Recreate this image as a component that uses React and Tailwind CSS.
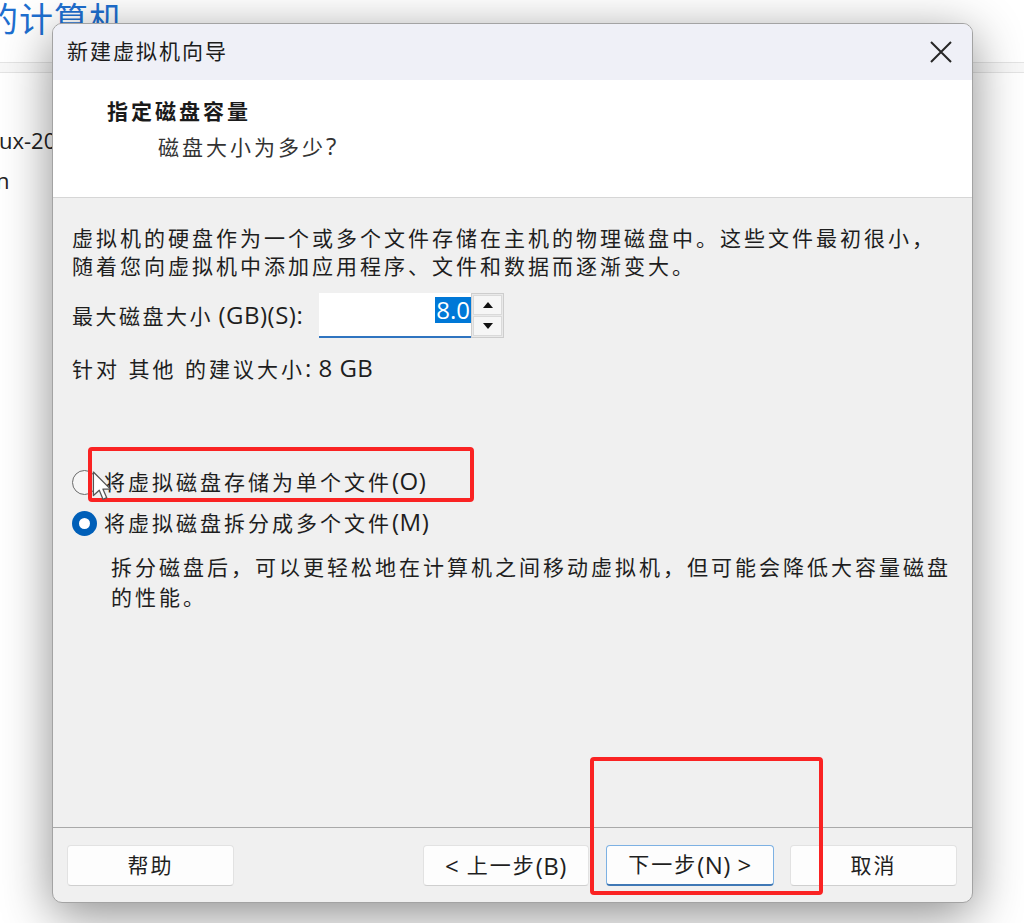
import { useState } from 'react';

// Latin runs are set larger than the CJK text, like Segoe UI next to YaHei
const L = ({ children }) => <span className="text-[24px] leading-none tracking-[0.5px]">{children}</span>;

const Radio = ({ checked }) =>
  checked ? (
    <span className="w-[25px] h-[25px] rounded-full bg-[#005fb8] flex items-center justify-center shrink-0">
      <span className="w-[11px] h-[11px] rounded-full bg-white" />
    </span>
  ) : (
    <span className="w-[25px] h-[25px] rounded-full border-[1.5px] border-[#6b6b6b] bg-[#f6f6f6] shrink-0" />
  );

const Btn = ({ children, primary, className = '' }) => (
  <button
    className={`h-[41px] rounded-[4px] bg-[#fdfdfd] text-[21px] tracking-[2px] text-[#1f1f1f] flex items-center justify-center whitespace-nowrap ${
      primary
        ? 'border border-[#7db1e3] border-b-2 border-b-[#3f78b5]'
        : 'border border-[#e2e2e2] border-b-[#cfcfcf]'
    } ${className}`}
  >
    {children}
  </button>
);

export default function App() {
  const [split, setSplit] = useState(true);

  return (
    <div className="relative w-[1024px] h-[923px] overflow-hidden bg-white font-['Open_Sans','Noto_Sans_CJK_SC',sans-serif] text-[#202020]">
      {/* Background application */}
      <div className="flex flex-col">
        <div className="h-[62px]">
          <div className="ml-[-16px] mt-[-4px] text-[34px] leading-[46px] tracking-[1px] text-[#1e6fd0]">的计算机</div>
        </div>
        <div className="h-[11px] border-y border-[#e4e4e4] bg-[#f8f8f8]" />
        <div className="pt-[50px] ml-[-1px] text-[22px] leading-[34px] text-[#222]">ux-2024</div>
        <div className="pt-[6px] ml-[-4px] text-[22px] leading-[34px] text-[#222]">n</div>
      </div>

      {/* Wizard window */}
      <div className="absolute left-[52px] top-[23px] w-[921px] h-[880px] rounded-[10px] border border-[#a3a3a3] bg-[#f0f0f0] overflow-hidden flex flex-col shadow-[0_12px_50px_rgba(0,0,0,0.45)]">
        {/* Title bar */}
        <div className="h-[56px] shrink-0 bg-[#eff0f7] flex items-center justify-between pl-[14px] pr-[20px]">
          <span className="text-[21px] tracking-[2px] text-[#1c1c1c]">新建虚拟机向导</span>
          <svg width="22" height="22" viewBox="0 0 22 22">
            <path d="M1 1 L21 21 M21 1 L1 21" stroke="#262626" strokeWidth="2" />
          </svg>
        </div>

        {/* Header */}
        <div className="h-[118px] shrink-0 bg-white border-b border-[#d6d6d6] pl-[54px] pt-[17px]">
          <div className="text-[21px] leading-[28px] font-bold tracking-[3px] text-[#1a1a1a]">指定磁盘容量</div>
          <div className="mt-[8px] ml-[51px] text-[21px] leading-[28px] tracking-[3px] text-[#333]">
            磁盘大小为多少<L>?</L>
          </div>
        </div>

        {/* Body */}
        <div className="flex-1 pl-[19px] pt-[26px] text-[21px] leading-[28px] text-[#1e1e1e]">
          <div className="tracking-[3px] whitespace-nowrap">虚拟机的硬盘作为一个或多个文件存储在主机的物理磁盘中。这些文件最初很小，</div>
          <div className="tracking-[3px] whitespace-nowrap">随着您向虚拟机中添加应用程序、文件和数据而逐渐变大。</div>

          <div className="mt-[13px] h-[45px] flex items-center">
            <span className="w-[247px] whitespace-nowrap">
              <span className="tracking-[2.5px]">最大磁盘大小</span> <L>(GB)(S):</L>
            </span>
            <div className="w-[152px] h-[45px] bg-white border-b-2 border-[#2f74c0] flex justify-end items-start pt-[4px]">
              <span className="h-[26px] px-[1px] bg-[#0078d7] text-white text-[24px] leading-[26px]">8.0</span>
            </div>
            <div className="w-[33px] h-[45px] flex flex-col border border-[#cdcdcd] bg-[#e9e9e9] p-[1px] gap-[1px]">
              <div className="flex-1 bg-[#f6f6f6] border border-[#dadada] flex items-center justify-center">
                <svg width="10" height="6" viewBox="0 0 10 6"><path d="M5 0 L10 6 L0 6 Z" fill="#111" /></svg>
              </div>
              <div className="flex-1 bg-[#f6f6f6] border border-[#dadada] flex items-center justify-center">
                <svg width="10" height="6" viewBox="0 0 10 6"><path d="M0 0 L10 0 L5 6 Z" fill="#111" /></svg>
              </div>
            </div>
          </div>

          <div className="mt-[17px] h-[28px] whitespace-nowrap">
            <span className="tracking-[3px]">针对 其他 的建议大小</span><L>: 8 GB</L>
          </div>

          <div className="mt-[85px] h-[28px] flex items-center gap-[7px] cursor-pointer" onClick={() => setSplit(false)}>
            <Radio checked={!split} />
            <span className="whitespace-nowrap"><span className="tracking-[3px]">将虚拟磁盘存储为单个文件</span><L>(O)</L></span>
          </div>
          <div className="mt-[13px] h-[28px] flex items-center gap-[7px] cursor-pointer" onClick={() => setSplit(true)}>
            <Radio checked={split} />
            <span className="whitespace-nowrap"><span className="tracking-[3px]">将虚拟磁盘拆分成多个文件</span><L>(M)</L></span>
          </div>
          <div className="mt-[15px] ml-[39px] leading-[30px] tracking-[3px] whitespace-nowrap">
            <div>拆分磁盘后，可以更轻松地在计算机之间移动虚拟机，但可能会降低大容量磁盘</div>
            <div>的性能。</div>
          </div>
        </div>

        {/* Footer */}
        <div className="h-[75px] shrink-0 border-t border-[#a9a9a9] flex items-start pt-[17px] pl-[14px] pr-[15px]">
          <Btn className="w-[167px]">帮助</Btn>
          <div className="flex-1" />
          <Btn className="w-[166px]"><L>&lt;</L>&nbsp;上一步<L>(B)</L></Btn>
          <Btn primary className="w-[168px] ml-[17px]">下一步<L>(N) &gt;</L></Btn>
          <Btn className="w-[167px] ml-[16px]">取消</Btn>
        </div>
      </div>

      {/* Annotation boxes */}
      <div className="absolute left-[88px] top-[447px] w-[386px] h-[55px] border-[4px] border-[#fa2323] rounded-[4px] pointer-events-none" />
      <div className="absolute left-[590px] top-[757px] w-[233px] h-[138px] border-[4px] border-[#fa2323] rounded-[4px] pointer-events-none" />

      {/* Mouse cursor */}
      <svg className="absolute left-[92px] top-[471px] pointer-events-none" width="22" height="32" viewBox="0 0 20 30">
        <path d="M1 1 L1 23 L6.5 18 L10 26.5 L13.5 25 L10 17 L17 17 Z" fill="#fff" stroke="#555" strokeWidth="1.2" strokeLinejoin="round" />
      </svg>
    </div>
  );
}
